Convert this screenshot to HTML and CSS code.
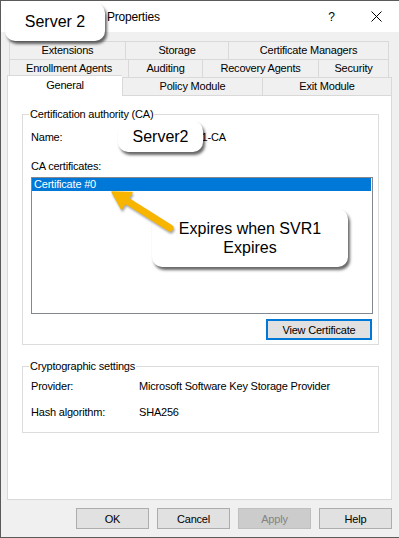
FILE: index.html
```html
<!DOCTYPE html>
<html lang="en">
<head>
    <meta charset="UTF-8">
    <meta name="viewport" content="width=device-width, initial-scale=1.0">
    <title>Properties</title>
    <link rel="stylesheet" href="styles.css">
</head>
<body>
    <div class="window">
        <div class="titlebar">
            <span class="title">Properties</span>
            <span class="tb-btn">?</span>
            <span class="tb-btn">
                <svg width="11" height="11" viewBox="0 0 11 11"><path d="M0.5 0.5 L10.5 10.5 M10.5 0.5 L0.5 10.5" stroke="#000" stroke-width="1" fill="none"/></svg>
            </span>
        </div>

        <div class="tabs">
            <div class="tab-row back">
                <div class="tab t-ext">Extensions</div>
                <div class="tab t-storage">Storage</div>
                <div class="tab t-mgr">Certificate Managers</div>
            </div>
            <div class="tab-row back">
                <div class="tab t-enroll">Enrollment Agents</div>
                <div class="tab t-audit">Auditing</div>
                <div class="tab t-recovery">Recovery Agents</div>
                <div class="tab t-security">Security</div>
            </div>
            <div class="tab-row front">
                <div class="tab t-general on">General</div>
                <div class="tab t-policy">Policy Module</div>
                <div class="tab t-exit">Exit Module</div>
            </div>
        </div>

        <div class="panel">
            <div class="group group-ca">
                <div class="group-title">Certification authority (CA)</div>
                <div class="field name-row">
                    <span class="label">Name:</span>
                    <span>contoso-SVR1-CA</span>
                </div>
                <div class="list-label">CA certificates:</div>
                <div class="listbox">
                    <div class="list-item selected">Certificate #0</div>
                </div>
                <div class="btn-row">
                    <button class="btn btn-view">View Certificate</button>
                </div>
            </div>

            <div class="group group-crypto">
                <div class="group-title">Cryptographic settings</div>
                <div class="field provider-row">
                    <span class="label">Provider:</span>
                    <span>Microsoft Software Key Storage Provider</span>
                </div>
                <div class="field hash-row">
                    <span class="label">Hash algorithm:</span>
                    <span>SHA256</span>
                </div>
            </div>
        </div>

        <div class="buttons">
            <button class="btn">OK</button>
            <button class="btn">Cancel</button>
            <button class="btn disabled">Apply</button>
            <button class="btn">Help</button>
        </div>

        <!-- annotation callouts -->
        <div class="callout c-server">Server 2</div>
        <div class="callout c-server2">Server2</div>
        <div class="callout c-expires">Expires when SVR1<br>Expires</div>
        <svg class="arrow" width="80" height="50" viewBox="100 186 80 50">
            <line x1="124" y1="199" x2="170" y2="228" stroke="#f7b500" stroke-width="7" stroke-linecap="round"/>
            <polygon points="112,192 132,192.5 121.5,209" fill="#f7b500" stroke="#f7b500" stroke-width="1.5" stroke-linejoin="round"/>
        </svg>
    </div>
</body>
</html>
```

FILE: styles.css
```css
* {
    box-sizing: border-box;
}
body {
    margin: 0;
    font-family: "Liberation Sans", Arial, sans-serif;
    font-size: 11px;
    letter-spacing: -0.2px;
    color: #000;
}
.window {
    position: relative;
    width: 399px;
    height: 538px;
    background: #f0f0f0;
    border-left: 1px solid #5a5a5a;
    border-top: 1px solid #5a5a5a;
    border-bottom: 1px solid #5a5a5a;
    overflow: hidden;
}

/* title bar */
.titlebar {
    height: 31px;
    background: #fff;
    display: flex;
    align-items: center;
}
.title {
    font-size: 12px;
    padding-left: 106px;
    flex: 1;
}
.tb-btn {
    width: 45px;
    height: 31px;
    display: flex;
    align-items: center;
    justify-content: center;
    font-size: 12px;
}

/* tabs */
.tabs {
    margin: 9px 0 0 6px;
}
.tab-row {
    display: flex;
    height: 18px;
}
.tab-row.back {
    margin-left: 2px;
}
.tab-row.front {
    height: 19px;
    align-items: flex-end;
}
.tab {
    flex: none;
    height: 18px;
    line-height: 17px;
    text-align: center;
    border-top: 1px solid #d9d9d9;
    border-left: 1px solid #d9d9d9;
    background: #f0f0f0;
}
.tab:last-child {
    border-right: 1px solid #d9d9d9;
}
.front .tab {
    height: 19px;
    border-bottom: 1px solid #d9d9d9;
}
.front .tab.on {
    height: 21px;
    line-height: 19px;
    margin-top: -2px;
    background: #fff;
    border-bottom: none;
}
.t-ext { width: 116px; }
.t-storage { width: 103px; }
.t-mgr { width: 161px; }
.t-enroll { width: 119px; }
.t-audit { width: 74px; }
.t-recovery { width: 116px; }
.t-security { width: 71px; }
.t-general { width: 115px; }
.t-policy { width: 140px; }
.t-exit { width: 130px; }

/* page panel */
.panel {
    margin-left: 6px;
    width: 385px;
    height: 404px;
    background: #fff;
    border: 1px solid #d9d9d9;
    border-top: none;
    padding: 18px 12px 0 14px;
}
.group {
    border: 1px solid #dcdcdc;
    padding: 0 5px 0 8px;
}
.group-title {
    margin: -7px 0 0 -2px;
    padding: 0 1px;
    width: fit-content;
    line-height: 13px;
    background: #fff;
}
.field {
    display: flex;
    line-height: 13px;
}
.label {
    width: 108px;
    flex: none;
}
.group-ca {
    padding-bottom: 4px;
}
.name-row {
    margin-top: 10px;
}
.list-label {
    margin-top: 16px;
    line-height: 13px;
}
.listbox {
    margin-top: 4px;
    height: 137px;
    border: 1px solid #828790;
    padding-right: 1px;
}
.list-item {
    height: 13px;
    line-height: 13px;
    padding-left: 2px;
}
.selected {
    background: #0078d7;
    color: #fff;
}
.btn-row {
    display: flex;
    justify-content: flex-end;
    margin-top: 5px;
    padding-right: 1px;
}
.group-crypto {
    margin-top: 21px;
    padding-bottom: 13px;
}
.provider-row {
    margin-top: 7px;
}
.hash-row {
    margin-top: 13px;
}

/* buttons */
.btn {
    font-family: inherit;
    font-size: 11px;
    letter-spacing: -0.2px;
    color: #000;
    background: #e1e1e1;
    border: 1px solid #adadad;
    width: 73px;
    height: 21px;
    padding: 0;
}
.btn-view {
    width: 106px;
    border: 2px solid #0078d7;
}
.btn.disabled {
    background: #cccccc;
    border-color: #bfbfbf;
    color: #838383;
}
.buttons {
    display: flex;
    justify-content: flex-end;
    gap: 8px;
    margin-top: 8px;
    padding-right: 7px;
}

/* annotations */
.callout {
    position: absolute;
    background: #fff;
    border-radius: 10px;
    box-shadow: 2px 3px 3px rgba(0, 0, 0, 0.6);
    font-size: 16px;
    letter-spacing: 0;
    display: flex;
    align-items: center;
    justify-content: center;
    text-align: center;
}
.c-server {
    left: 4px;
    top: 2px;
    width: 100px;
    height: 38px;
}
.c-server2 {
    left: 117px;
    top: 120px;
    width: 85px;
    height: 31px;
}
.c-expires {
    left: 151px;
    top: 208px;
    width: 196px;
    height: 58px;
    line-height: 19px;
}
.arrow {
    position: absolute;
    left: 99px;
    top: 185px;
    filter: drop-shadow(1px 2px 1px rgba(0, 0, 0, 0.35));
}
```
